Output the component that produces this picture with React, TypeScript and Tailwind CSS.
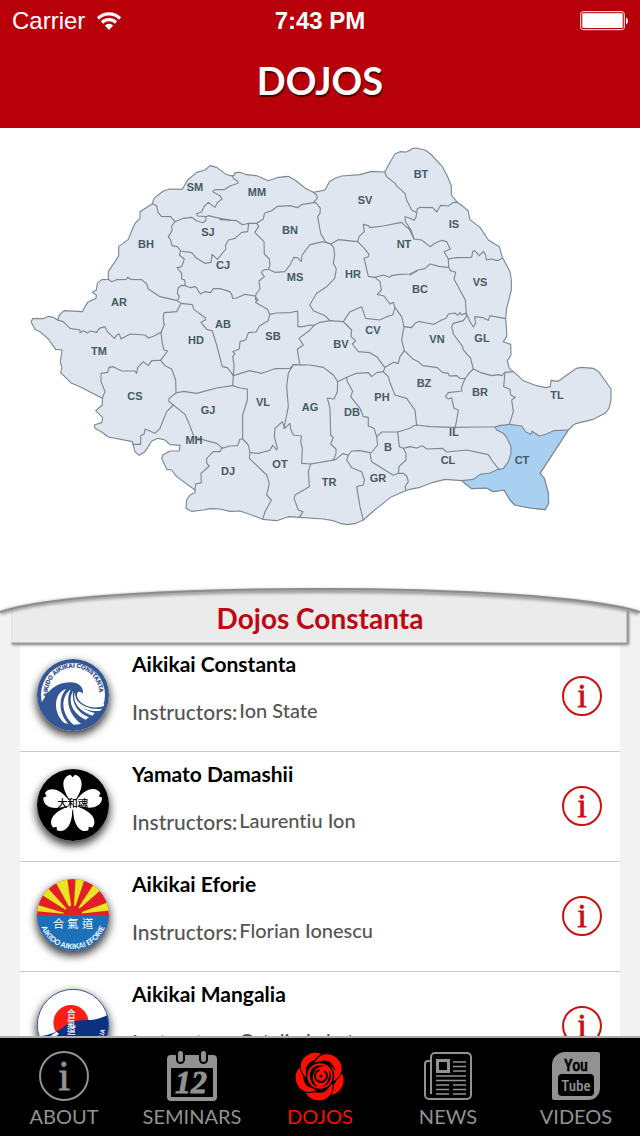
import type { ReactNode } from 'react';

/* Map geometry: three units per CSS pixel, split in tiles that share one origin. */
type Tile = readonly [number, number];
const NW: Tile = [0, 0];
const N: Tile = [570, 0];
const NE: Tile = [1170, 0];
const SW: Tile = [0, 540];
const S: Tile = [570, 540];
const SE: Tile = [1170, 540];

const place = ([dx, dy]: Tile, points: string) =>
  points
    .split(' ')
    .map((p) => {
      const [x, y] = p.split(',').map(Number);
      return `${x + dx},${y + dy}`;
    })
    .join(' ');

const OUTLINE = [
  place(NW, '33,545 38,536 70,536 85,529 100,532 113,540 118,525 132,512 187,515 195,500 203,487 228,475 229,465 217,457 229,450 232,430 245,419 265,418 265,395 285,365 296,347 296,320 325,298 335,272 345,250 360,235 360,215 397,191 402,175 430,153 450,147 487,148 503,120 530,97 555,90 570,77 590,82 615,101 630,107'),
  place(N, '72,107 75,98 90,97 110,104 140,107 175,122 205,112 235,109 255,120 285,144 310,157 345,150 358,125 375,115 395,108 450,104 485,94 524,96 540,67 555,42 570,35 590,36 610,25'),
  place(NE, '18,24 45,30 62,42 97,80 112,108 124,138 124,165 142,187 160,200 175,213 179,238 210,262 235,300 268,320 277,352 300,395 304,420 304,450 290,505 287,535 290,575'),
  place(SE, '290,50 280,65 302,73 303,105 292,122 298,145 310,155 340,182 380,197 408,203 421,200 423,181 445,184 475,162 500,145 515,142 550,145 566,155 603,207 603,240 597,265 585,280 550,298 500,310 490,315 475,330 390,460 403,475 415,520 416,550 405,569 360,564 315,555 300,540 282,510 250,515 230,504 185,506 155,482 105,478 70,487 30,502 0,508'),
  place(S, '585,513 545,530 500,565 460,600 435,611 410,614 390,610 370,602 340,597 270,592 235,590 200,602 158,598 125,585 90,573 60,574 30,567 0,566'),
  place(SW, '550,570 515,574 498,565 500,540 510,525 525,518 525,510 470,470 455,450 440,448 425,415 428,405 450,393 478,393 480,376 450,374 435,360 415,355 395,363 375,395 357,406 345,395 337,365 265,351 245,336 225,325 223,315 245,308 248,293 227,272 247,255 247,235 215,218 180,200 155,190 122,158 126,143 121,127 126,90 107,88 85,57 60,35 45,28 33,5'),
].join(' ');

const CONSTANTA = place(
  SE,
  '255,321 268,317 298,313 335,318 348,336 362,343 366,334 388,348 410,342 430,332 475,330 390,460 403,475 415,520 416,550 405,569 360,564 315,555 300,540 282,510 250,515 230,504 185,506 170,495 155,482 190,478 210,463 240,459 265,448 280,446 295,425 303,400 303,380 290,352 280,340 260,330',
);

const BORDERS: [Tile, string[]][] = [
  [NW, [
    '397,191 410,197 414,217 424,229 452,230 465,245',
    '465,245 490,235 515,232 530,242 548,248 557,243 558,230 533,228 529,221 545,216 552,200 565,187 585,202 592,188 606,177 600,167 578,155 585,149 612,149 630,138 654,130 654,125 640,115 637,107',
    '558,230 565,227 600,235 630,240',
    '465,245 455,258 456,272 445,290 452,300 456,317 472,320 482,333 515,338 530,355 555,370 573,367 576,343 592,358',
    '482,333 478,345 493,357 485,380 471,383 485,400 485,417 494,420 496,437 485,436 475,443 472,460 478,470 472,482 483,490 517,494 522,508 535,518 556,533 556,540 543,547 560,568 577,573',
    '496,437 512,443 527,440 541,462 555,455 572,458 580,446 600,446 630,455',
    '265,418 275,425 290,419 318,418 323,412 332,418 365,419 380,432 385,447 420,470 472,482',
    '483,490 470,515 432,518 430,530 431,550 434,552 423,577',
    '113,540 130,545 150,565 180,570 180,578 190,572 202,579 212,573 230,577 238,565 255,560 262,575 283,595 292,583 298,582 303,597 330,582 375,585 385,594 400,589 423,577',
  ]],
  [N, [
    '30,239 80,242 97,254 108,252 116,250 140,250 160,237 163,220 185,212 203,199 240,197 262,203 275,194 310,188 322,175 320,165 310,157',
    '22,358 48,327 46,317 55,300 75,295 95,277 113,275 116,250',
    '60,457 65,462 68,475 80,474 105,463 135,468 144,480',
    '140,250 146,260 134,277 162,305 163,342 178,357 180,375 175,388 160,390 154,397 163,410 147,423 150,447 138,462 136,478 144,480 136,487 150,495 172,508 179,523',
    '175,388 195,397 225,395 240,375 252,352 262,353 274,365 276,345 300,314 340,305 362,312',
    '179,523 200,519 240,518 263,513 264,560 278,560 300,555 312,556 330,547 360,542 400,545 420,515 455,500 467,535 510,540 530,530 548,525 555,503',
    '179,523 175,542 148,558 138,576 115,578 107,600 90,605 88,627 68,635 75,642 68,650 72,675 70,707',
    '310,188 318,188 331,205 330,220 323,230 332,280 346,305 362,312 385,299 443,305 447,290 463,275 460,253 475,257 480,263 520,258 575,247 590,262 600,268',
    '524,96 530,110 555,130 562,140 585,160 590,180 605,210 618,217',
    '600,268 595,258 586,245 585,230 600,235 612,241 618,232 622,207',
    '597,262 604,272 612,297',
    '443,305 463,325 477,343 475,350 462,355 466,370 475,409 495,412 520,405 538,412 545,407 570,403 600,402 620,392',
    '362,312 371,322 374,345 370,370 379,387 374,415 350,440 320,460 299,495 310,512 345,527 360,542',
    '495,412 510,425 514,450 502,463 522,468 540,492 550,487 555,503 575,530 582,560 575,600 583,632',
    '582,560 605,563 615,550 625,545',
  ]],
  [NE, [
    '22,207 30,202 68,203 80,216 92,196 115,198 130,187 142,187',
    '-4,265 12,297 35,300 60,320 75,310 95,301 110,305 121,327 102,335 115,357 140,353 185,352 188,335 193,331 208,347 220,334 227,345 229,360 245,357 262,362 277,355',
    '115,357 116,382 90,380 60,372 45,386 25,390 0,405',
    '116,382 122,392 137,397 132,417 166,480 169,520 180,545 190,561 197,550 194,530 215,532 235,541 240,527 287,536',
    '170,525 165,520 155,525 150,518 143,526 135,519 115,522 108,535 95,540 72,553 50,549 25,544',
    '170,528 160,542 130,550 125,560 130,582 158,620 160,630 182,655 190,687',
  ]],
  [SW, [
    '577,33 590,75 607,140 622,143 633,157 640,167',
    '423,37 427,70 432,90 443,93 430,110 422,121 435,137 455,147 467,180 468,219 447,235 447,245 460,255 495,283 507,310 522,350 545,358 590,370 605,383 600,395 580,395 560,415 560,430 568,438 543,460 544,488 527,492 525,510',
    '468,219 490,214 530,220 590,204 638,197',
    '460,255 440,275 420,325 405,340 375,327 372,343 362,347 362,373 338,373',
    '247,235 255,215 243,185 243,160 263,157 267,142 280,140 305,153 345,153 350,160 353,142 370,125 385,137 395,122 422,121',
    '605,385 630,378 653,377 660,357 668,357',
  ]],
  [S, [
    '583,92 570,110 565,130 550,127 525,142 520,155 535,170 540,188 555,225 590,235 615,270 620,317',
    '583,92 610,118 625,125 638,137 682,143 697,157 715,160 718,168 740,167 750,175 765,176',
    '400,5 410,15 425,30 423,50 437,62 427,72 445,95 480,98 500,110 524,142',
    '312,16 300,30 267,55 280,75 262,88 269,132',
    '70,167 118,152 155,160 195,146 240,145 250,134 300,135 340,142 370,165 383,185 410,172 440,160 475,158 485,170 500,158 520,155',
    '70,167 68,197 90,204 112,207 112,240 98,285 98,357 115,375 120,398 145,400 160,396 180,391 188,376 200,390 202,385 193,350 195,325 217,305 224,325 240,310 242,327 250,345 275,348 272,365 277,385 275,430 302,432',
    '250,134 235,160 230,200 235,260 222,325',
    '383,185 382,215 372,237 352,234 360,265 362,345 370,352 362,372 378,387 378,400 370,421',
    '302,432 360,422 378,418 398,401 415,405 425,393 450,392 480,398',
    '410,172 412,185 428,213 422,230 450,265 460,290 475,292 475,318 492,325 500,350 503,375 480,402 485,425 550,466 565,460 567,440 588,420 588,400 580,385 568,380 563,336',
    '500,350 515,336 563,336 600,325 608,319 620,315 660,320 735,322 800,321 855,321',
    '580,385 600,380 620,384 637,377 650,387 698,385 710,396 770,390 835,404 845,420 865,446',
    '565,460 580,460 590,468 595,485 585,500 588,512',
    '415,405 410,420 425,443 455,455 463,480 460,495 440,500 450,560 460,600',
    '302,432 295,455 298,500 255,525 252,535 265,570 279,575 268,592',
    '120,398 118,415 170,465 178,490 170,525 184,540 165,575 158,598',
  ]],
  [SE, [
    '165,176 175,162 190,147 210,157 245,167 265,164 275,167 285,157 310,155',
    '165,176 155,200 155,213 115,218 106,230 115,237 125,233 132,265 145,270 140,300 135,325',
    '285,157 281,200 300,208 302,225 316,232 305,240 310,275 298,313',
  ]],
];

const LABELS: [string, number, number][] = [
  ['SM', 195, 187], ['MM', 257, 192], ['SV', 365, 200], ['BT', 421, 174], ['IS', 454, 224],
  ['BH', 146, 244], ['SJ', 208, 232], ['BN', 290, 230], ['NT', 404, 244], ['CJ', 223, 265],
  ['MS', 295, 277], ['HR', 353, 274], ['BC', 420, 289], ['VS', 480, 282], ['AR', 119, 302],
  ['AB', 223, 324], ['HD', 196, 340], ['SB', 273, 336], ['BV', 341, 344], ['CV', 373, 330],
  ['VN', 437, 339], ['GL', 482, 338], ['TM', 99, 351], ['CS', 135, 396], ['GJ', 208, 410],
  ['VL', 263, 402], ['AG', 310, 407], ['DB', 352, 412], ['PH', 382, 397], ['BZ', 424, 383],
  ['BR', 480, 392], ['TL', 557, 395], ['MH', 194, 440], ['DJ', 228, 471], ['OT', 280, 464],
  ['TR', 329, 482], ['GR', 378, 478], ['B', 388, 447], ['IL', 454, 432], ['CL', 448, 460],
  ['CT', 522, 460],
];

function CountyMap() {
  return (
    <svg viewBox="0 128 640 456" className="block h-auto w-full" role="img" aria-label="Map of counties">
      <g transform="translate(20 140) scale(.33333)" stroke="#7c8894" strokeWidth="3.4" strokeLinejoin="round" strokeLinecap="round">
        <polygon points={OUTLINE} fill="#e0e6f0" />
        {BORDERS.map(([tile, lines]) =>
          lines.map((line) => <polyline key={line} points={place(tile, line)} fill="none" />),
        )}
        <polygon points={CONSTANTA} fill="#a9d0f1" />
      </g>
      <g fill="#465862" textAnchor="middle" className="font-['Liberation_Sans',sans-serif] text-[11px] font-bold">
        {LABELS.map(([name, x, y]) => (
          <text key={name} x={x} y={y + 4}>{name}</text>
        ))}
      </g>
    </svg>
  );
}

function WaveBadge() {
  return (
    <svg viewBox="0 0 216 216" className="size-full">
      <defs><path id="wave-arc" d="M33 113A77 77 0 1 1 182 128" /></defs>
      <circle cx="108" cy="108" r="108" fill="#335796" />
      <circle cx="108" cy="108" r="96" fill="#fff" />
      <path d="M10 140C30 95 58 70 98 70C126 70 140 84 138 104C130 97 124 97 121 102C124 128 150 146 176 145C188 145 198 142 206 136A108 108 0 0 1 108 214A108 108 0 0 1 10 140Z" fill="#335796" />
      <path d="M121 102C114 124 148 154 200 142L202 134C164 142 138 130 131 108Z" fill="#fff" />
      <path d="M88 90C50 100 46 160 82 192L94 194C62 160 66 112 88 90Z" fill="#fff" />
      <path d="M101 91C68 116 74 168 110 197L132 195C96 168 84 126 101 91Z" fill="#fff" />
      <path d="M108 96C92 126 104 162 146 182L156 175C118 160 104 130 108 96Z" fill="#fff" />
      <path d="M113 100C106 136 132 158 166 170L173 162C138 154 116 132 113 100Z" fill="#fff" />
      <path d="M118 122C128 146 154 158 188 156L196 149C160 153 136 142 118 122Z" fill="#fff" />
      <text fill="#2b4c8c" stroke="#2b4c8c" strokeWidth=".8" className="font-['Liberation_Sans',sans-serif] text-[18px] font-bold">
        <textPath href="#wave-arc">AIKIDO AIKIKAI CONSTANTA</textPath>
      </text>
    </svg>
  );
}

function FlowerBadge() {
  return (
    <svg viewBox="0 0 216 216" className="size-full">
      <circle cx="108" cy="108" r="108" fill="#000" />
      {[0, 72, 144, 216, 288].map((angle) => (
        <path
          key={angle}
          d="M107 106C94 88 80 68 79 46C79 30 88 19 100 17L107 25L114 17C126 19 134 30 134 46C133 68 119 88 107 106Z"
          fill="#fff"
          transform={`rotate(${angle} 107 107)`}
        />
      ))}
      <circle cx="107" cy="107" r="16" fill="#fff" />
      <path d="M105 150L107 118L109 150Z" fill="#000" />
      <text x="107" y="114" textAnchor="middle" fill="#000" className="font-['Noto_Sans_CJK_JP',sans-serif] text-[31px] font-medium">大和魂</text>
    </svg>
  );
}

const RAYS = [[6, 16], [33, 47], [62, 81], [94, 108], [124, 138], [160, 173]];

const ray = ([from, to]: number[]) => {
  const at = (deg: number, r: number) => {
    const a = (deg * Math.PI) / 180;
    return `${108 - r * Math.cos(a)},${108 - r * Math.sin(a)}`;
  };
  return `${at(from + 2, 28)} ${at(from, 112)} ${at(to, 112)} ${at(to - 2, 28)}`;
};

function SunriseBadge() {
  return (
    <svg viewBox="0 0 216 216" className="size-full">
      <defs>
        <clipPath id="sunrise-clip"><circle cx="108" cy="108" r="108" /></clipPath>
        <path id="sunrise-arc" d="M6 108A101 101 0 0 0 210 108" />
      </defs>
      <g clipPath="url(#sunrise-clip)">
        <rect width="216" height="216" fill="#e31f26" />
        {RAYS.map((r) => <polygon key={r[0]} points={ray(r)} fill="#e9e522" />)}
        <rect y="108" width="216" height="108" fill="#1c70b8" />
      </g>
      <g fill="#fff" textAnchor="middle" className="font-['Noto_Sans_CJK_TC',sans-serif] text-[34px]">
        <text x="65" y="148">合</text>
        <text x="108" y="148">氣</text>
        <text x="152" y="148">道</text>
      </g>
      <text fill="#fff" textAnchor="middle" className="font-['Lato',sans-serif] text-[22px] font-bold">
        <textPath href="#sunrise-arc" startOffset="50%">AIKIDO AIKIKAI EFORIE</textPath>
      </text>
    </svg>
  );
}

function SeaBadge() {
  return (
    <svg viewBox="0 0 216 216" className="size-full">
      <defs>
        <clipPath id="sea-clip"><circle cx="108" cy="108" r="107" /></clipPath>
        <path id="sea-arc" d="M13 134A98 98 0 0 0 204 122" />
      </defs>
      <g clipPath="url(#sea-clip)">
        <rect width="216" height="216" fill="#fff" />
        <circle cx="102" cy="101" r="53" fill="#fb1e14" />
        <path d="M0 142C36 140 60 130 82 112C104 94 130 94 160 93C184 91 200 84 216 76V216H0Z" fill="#0b3281" />
        <path d="M20 150C34 146 46 138 58 128L66 134C54 146 40 152 24 158Z" fill="#fff" />
      </g>
      <circle cx="108" cy="108" r="107" fill="none" stroke="#33549a" strokeWidth="3" />
      <g fill="#fff" textAnchor="middle" className="font-['Noto_Sans_CJK_TC',sans-serif] text-[26px] font-medium">
        <text x="103" y="84">合</text>
        <text x="103" y="110">氣</text>
        <text x="103" y="136">道</text>
      </g>
      <text fill="#fff" textAnchor="end" className="font-['Lato',sans-serif] text-[18px] font-bold">
        <textPath href="#sea-arc" startOffset="100%">AIKIDO AIKIKAI MANGALIA</textPath>
      </text>
    </svg>
  );
}

function AboutIcon() {
  return (
    <svg viewBox="0 0 50 50" className="size-[50px]" fill="#929292">
      <circle cx="25" cy="25" r="24" fill="none" stroke="#929292" strokeWidth="2" />
      <text x="25" y="39" textAnchor="middle" stroke="#929292" strokeWidth=".8" className="font-['Liberation_Serif',serif] text-[42px]">i</text>
    </svg>
  );
}

function CalendarIcon() {
  return (
    <svg viewBox="0 0 50 50" className="size-[50px]" fill="#929292">
      <path fillRule="evenodd" d="M4 4H46A4 4 0 0 1 50 8V46A4 4 0 0 1 46 50H4A4 4 0 0 1 0 46V8A4 4 0 0 1 4 4ZM4 17V46H46V17Z" />
      <g stroke="#000" strokeWidth="2">
        <rect x="10" y="-1" width="7" height="13" rx="3.5" />
        <rect x="33" y="-1" width="7" height="13" rx="3.5" />
      </g>
      <text x="24" y="42" textAnchor="middle" stroke="#929292" strokeWidth=".8" className="font-['Liberation_Serif',serif] text-[32px] font-bold italic">12</text>
    </svg>
  );
}

function RoseIcon() {
  return (
    <svg viewBox="0 0 50 50" className="size-[50px]" fill="#fe0d00">
      {[108, 180, 252, 324, 36].map((angle) => (
        <g key={angle} transform={`rotate(${angle} 25 25)`}>
          <path
            d="M12 17C11 7 17 0 26 0C35 0 41 6 41 14C41 20 38 25 33 28L16 27Z"
            stroke="#000"
            strokeWidth="1.200"
          />
          <path d="M15 17C17 8 26 5 35 12C28 9 20 12 17 21Z" fill="#000" />
        </g>
      ))}
      <circle cx="25" cy="25" r="13.500" stroke="#000" strokeWidth="1.500" />
      <path d="M15 27C13 18 21 12 30 15C23 15 18 19 18 27C18 31 20 34 23 36C18 35 16 31 15 27Z" fill="#000" />
      <path d="M34 19C38 25 36 34 27 36C32 33 35 28 34 19Z" fill="#000" />
      <circle cx="26" cy="25" r="6" fill="none" stroke="#000" strokeWidth="1.800" strokeDasharray="26 5" />
      <circle cx="26" cy="25" r="1.500" fill="#000" />
    </svg>
  );
}

function NewsIcon() {
  return (
    <svg viewBox="0 0 50 50" className="size-[50px]" fill="none" stroke="#929292" strokeWidth="2">
      <path d="M8 43V6A4 4 0 0 1 12 2H44A4 4 0 0 1 48 6V44A4 4 0 0 1 44 48H6A4 4 0 0 1 2 44V13A3 3 0 0 1 5 10H8" />
      <rect x="14.500" y="9.500" width="11" height="11" strokeWidth="3" />
      <path d="M30 11H43M30 15.500H43M30 20H43M13 25H43M13 29.500H43M13 34H26M30 34H43M13 38.500H26M30 38.500H43M13 43H26M30 43H43" strokeWidth="1.600" />
    </svg>
  );
}

function VideosIcon() {
  return (
    <svg viewBox="0 0 50 50" className="size-[50px]">
      <path d="M14 1H47Q49 1 49 3V36A12 12 0 0 1 37 49H3Q1 49 1 47V14A13 13 0 0 1 14 1Z" fill="#929292" />
      <rect x="7" y="23" width="36" height="22" rx="4" fill="#000" />
      <g textAnchor="middle" className="font-['Roboto_Condensed','Roboto',sans-serif] font-medium">
        <text x="25" y="20" fill="#000" stroke="#000" strokeWidth=".4" className="text-[16px]">You</text>
        <text x="25" y="40" fill="#929292" className="text-[15px]">Tube</text>
      </g>
    </svg>
  );
}

const DOJOS: { name: string; instructor: string; badge: ReactNode }[] = [
  { name: 'Aikikai Constanta', instructor: 'Ion State', badge: <WaveBadge /> },
  { name: 'Yamato Damashii', instructor: 'Laurentiu Ion', badge: <FlowerBadge /> },
  { name: 'Aikikai Eforie', instructor: 'Florian Ionescu', badge: <SunriseBadge /> },
  { name: 'Aikikai Mangalia', instructor: 'Catalin Labat', badge: <SeaBadge /> },
];

const TABS: { label: string; icon: ReactNode; active?: boolean }[] = [
  { label: 'ABOUT', icon: <AboutIcon /> },
  { label: 'SEMINARS', icon: <CalendarIcon /> },
  { label: 'DOJOS', icon: <RoseIcon />, active: true },
  { label: 'NEWS', icon: <NewsIcon /> },
  { label: 'VIDEOS', icon: <VideosIcon /> },
];

function StatusBar() {
  return (
    <div className="grid h-10 grid-cols-3 items-center px-3 pt-0.5 font-['Liberation_Sans',sans-serif] text-2xl">
      <div className="flex items-center gap-3">
        <span>Carrier</span>
        <svg viewBox="0 0 24 18" className="h-[18px] w-6" fill="none" stroke="#fff" strokeWidth="3.200">
          <path d="M1 6.500A15.500 15.500 0 0 1 23 6.500" />
          <path d="M5 10.500A10 10 0 0 1 19 10.500" />
          <path d="M12 18L7.800 13.500A6 6 0 0 1 16.200 13.500Z" fill="#fff" stroke="none" />
        </svg>
      </div>
      <span className="text-center font-bold">7:43 PM</span>
      <svg viewBox="0 0 48 20" className="h-5 w-12 justify-self-end" fill="#fff">
        <rect x=".7" y=".7" width="43.600" height="18" rx="2.500" fill="none" stroke="#fff" strokeWidth="1" />
        <rect x="2.300" y="2.300" width="40.400" height="14.800" rx="1" />
        <path d="M46 6.500Q48 7 48 10Q48 13 46 13.500Z" />
      </svg>
    </div>
  );
}

export default function App() {
  return (
    <div className="flex h-screen flex-col overflow-hidden bg-white font-['Lato',sans-serif] [font-variant-ligatures:none]">
      <header className="h-32 shrink-0 bg-[#b8000b] text-white">
        <StatusBar />
        <h1 className="pt-[14px] text-center text-[38px] leading-[52px] font-bold [text-shadow:1px_2px_1px_#400]">DOJOS</h1>
      </header>

      <main className="flex min-h-0 flex-1 flex-col">
        <div className="shrink-0">
          <CountyMap />
        </div>

        <div className="relative z-10 grid shrink-0">
          <svg viewBox="0 0 640 58" preserveAspectRatio="none" className="col-start-1 row-start-1 h-[58px] w-full overflow-visible">
            <defs>
              <filter id="soft" x="-5%" y="-50%" width="110%" height="200%"><feGaussianBlur stdDeviation="1.500" /></filter>
            </defs>
            <path d="M0 28H640V58H0Z" fill="#f2f2f2" />
            <path d="M12 26H629V61H12Z" fill="#777" filter="url(#soft)" />
            <path d="M11 25V59H627V25C560 12 440 5 320 5C200 5 70 11 11 25Z" fill="#ebebeb" stroke="#a0a0a0" strokeWidth="1" />
            <path d="M10 25V59" stroke="#f2f2f2" strokeWidth="3" />
            <path d="M1 29C50 12 190 7 320 7C450 7 590 14 639 29" fill="none" stroke="#999" strokeWidth="4" filter="url(#soft)" />
            <path d="M0 28C50 11 190 5 320 5C450 5 590 12 640 28" fill="none" stroke="#8c8c8c" strokeWidth="2" />
          </svg>
          <h2 className="relative col-start-1 row-start-1 pt-4 text-center text-[28px] leading-9 font-bold text-[#bd0713]">Dojos Constanta</h2>
        </div>

        <div className="min-h-0 flex-1 overflow-hidden bg-[#f2f2f2] px-5">
          <ul className="bg-white">
            {DOJOS.map(({ name, instructor, badge }) => (
              <li key={name} className="flex h-[110px] items-start border-b border-[#c8c8c8] pr-[18px] pl-[17px]">
                <div className="mt-[17px] size-[72px] shrink-0 rounded-full shadow-[0_4px_8px_1px_rgba(0,0,0,0.75)]">{badge}</div>
                <div className="min-w-0 flex-1 pt-2 pl-[23px]">
                  <h3 className="text-[21px] leading-7 font-bold text-black">{name}</h3>
                  <p className="flex items-start gap-0.5 pt-[18px] text-[20px] leading-7 font-medium text-[#555]">
                    <span className="pt-0.5 text-[21px]">Instructors:</span>
                    <span>{instructor}</span>
                  </p>
                </div>
                <button type="button" aria-label={`Details of ${name}`} className="mt-[34px] size-10 shrink-0">
                  <svg viewBox="0 0 40 40" className="size-full" fill="#cb1010">
                    <circle cx="20" cy="20" r="19" fill="none" stroke="#cb1010" strokeWidth="2" />
                    <text x="20" y="31" textAnchor="middle" stroke="#cb1010" strokeWidth=".8" className="font-['Liberation_Serif',serif] text-[33px]">i</text>
                  </svg>
                </button>
              </li>
            ))}
          </ul>
        </div>
      </main>

      <nav className="grid h-[100px] shrink-0 grid-cols-5 border-t-2 border-[#aaa] bg-black">
        {TABS.map(({ label, icon, active }) => (
          <a
            key={label}
            href={`#${label.toLowerCase()}`}
            aria-current={active ? 'page' : undefined}
            className={`flex flex-col items-center pt-[13px] text-xl leading-[30px] ${active ? 'text-[#fe0d00]' : 'text-[#929292]'}`}
          >
            {icon}
            {label}
          </a>
        ))}
      </nav>
    </div>
  );
}
